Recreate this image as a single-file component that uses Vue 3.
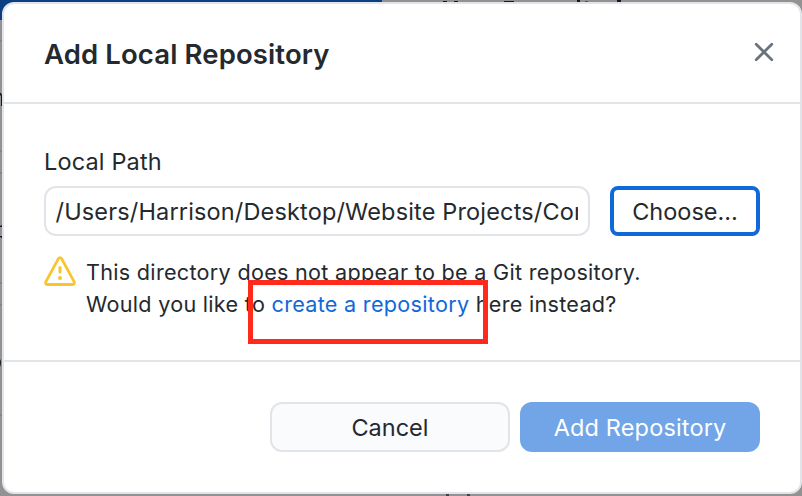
<script setup>
import { ref } from 'vue'

const path = ref('/Users/Harrison/Desktop/Website Projects/Con')
const rules = [40, 150, 172, 282, 304, 414]
</script>

<template>
  <div class="screen">
    <div class="backdrop" aria-hidden="true">
      <i class="toolbar"></i>
      <i v-for="y in rules" :key="y" class="rule" :style="{ top: y + 'px' }"></i>
      <svg class="fragments" width="802" height="496" viewBox="0 0 802 496">
        <g fill="#16191c">
          <path d="M443 1h4v1h-4zM454 1h4v1h-4zM504 1h10v1h-10zM577 0h3v2h-3zM617 0h4v2h-4z" />
          <path d="M0 93h1l1 2v11h-1v-10l-1-1zM0 226l2-1v2H0zM0 236h2v2l-2-1zM0 359q2 3 0 8z" />
        </g>
        <path d="M585 1h3v1h-3z" fill="#55585a" />
        <path d="M446 494h3v2h-3zM467 494h3v2h-3z" fill="#404349" />
      </svg>
    </div>

    <section class="dialog" role="dialog">
      <header class="head">
        <h1>Add Local Repository</h1>
        <button class="close" aria-label="Close">
          <svg width="20" height="20" viewBox="0 0 20 20" fill="none" stroke="#69737d" stroke-width="2.7" stroke-linecap="round">
            <path d="M2.2 2.2 17.8 17.8M17.8 2.2 2.2 17.8" />
          </svg>
        </button>
      </header>

      <div class="body">
        <label class="label" for="local-path">Local Path</label>
        <div class="row">
          <div id="local-path" class="input"><span class="clip">{{ path }}</span></div>
          <button class="btn choose">Choose…</button>
        </div>
        <div class="warning">
          <svg class="alert" width="32" height="32" viewBox="0 0 32 32" fill="none">
            <path d="M14.4 2.6 1.9 25.6Q1 28.4 3.5 28.5H28.5Q31 28.4 30.1 25.6L17.6 2.6Q16 0.6 14.4 2.6Z" stroke="#f9c52f" stroke-width="2.8" stroke-linejoin="round" />
            <path d="M16 11.6V16.1" stroke="#f9c52f" stroke-width="3" stroke-linecap="round" />
            <circle cx="16" cy="21.9" r="2" fill="#f9c52f" />
          </svg>
          <p>
            This directory does not appear to be a Git repository.<br />
            Would you like to <a>create a repository</a> here instead?
          </p>
        </div>
      </div>

      <footer class="foot">
        <button class="btn cancel">Cancel</button>
        <button class="btn primary">Add Repository</button>
      </footer>
    </section>

    <div class="highlight"></div>
  </div>
</template>

<style>
body {
  margin: 0;
  overflow: hidden;
}
</style>

<style scoped>
.screen {
  position: relative;
  box-sizing: border-box;
  width: 802px;
  height: 496px;
  padding: 2px 0 2px 2px;
  overflow: hidden;
  background: #929292;
  color: #24292e;
  font-family: Inter, "Liberation Sans", sans-serif;
}
.screen * {
  box-sizing: border-box;
}
.backdrop {
  position: absolute;
  inset: 0;
}
.toolbar {
  position: absolute;
  top: 0;
  left: 0;
  width: 382px;
  height: 20px;
  background: #0c3f82;
}
.rule {
  position: absolute;
  left: 0;
  width: 2px;
  height: 2px;
  background: #828383;
}
.fragments {
  position: absolute;
  inset: 0;
}
.dialog {
  position: relative;
  display: flex;
  flex-direction: column;
  width: 800px;
  height: 492px;
  border: 2px solid #e1e4e8;
  border-radius: 12px;
  background: #fff;
}
.head {
  display: flex;
  align-items: flex-start;
  justify-content: space-between;
  height: 100px;
  padding: 33px 26px 0 40px;
  border-bottom: 2px solid #e1e4e8;
}
h1 {
  margin: 0;
  font-size: 27.5px;
  font-weight: 600;
  line-height: 34px;
  letter-spacing: 0.12px;
  white-space: nowrap;
}
button {
  margin: 0;
  padding: 0;
  font-family: inherit;
  color: inherit;
}
.close {
  display: flex;
  border: 0;
  background: none;
  margin-top: 5px;
}
.body {
  height: 258px;
  padding: 40px 38px 0 40px;
  border-bottom: 2px solid #e1e4e8;
}
.label {
  display: block;
  height: 42px;
  font-size: 23.5px;
  line-height: 36px;
  letter-spacing: 0.15px;
}
.row {
  display: flex;
  gap: 20px;
}
.input {
  width: 546px;
  height: 50px;
  padding: 0 10px 0 9.5px;
  border: 2px solid #e1e4e8;
  border-radius: 12px;
  font-size: 23.5px;
  line-height: 47px;
  letter-spacing: 0.16px;
}
.clip {
  display: block;
  overflow: hidden;
  white-space: nowrap;
}
.btn {
  display: flex;
  align-items: center;
  justify-content: center;
  height: 50px;
  padding-top: 2px;
  border-radius: 12px;
  font-size: 23.5px;
  line-height: 30px;
  white-space: nowrap;
}
.choose {
  width: 150px;
  border: 4px solid #1069d8;
  border-radius: 8px;
  background: #fff;
}
.warning {
  display: flex;
  gap: 10px;
  padding-top: 20px;
}
.alert {
  flex: none;
}
p {
  margin: 0;
  font-size: 21.6px;
  line-height: 32px;
  letter-spacing: 0.29px;
  white-space: nowrap;
}
a {
  color: #1069d8;
}
.foot {
  display: flex;
  gap: 10px;
  justify-content: flex-end;
  padding: 40px 40px 0;
}
.cancel {
  width: 240px;
  border: 2px solid #e1e4e8;
  background: #fafbfd;
}
.primary {
  width: 240px;
  border: 0;
  background: #71a5e7;
  color: #fff;
  letter-spacing: 0.15px;
}
.highlight {
  position: absolute;
  left: 248px;
  top: 280px;
  width: 240px;
  height: 64px;
  border: 5px solid #ff291c;
}
</style>
